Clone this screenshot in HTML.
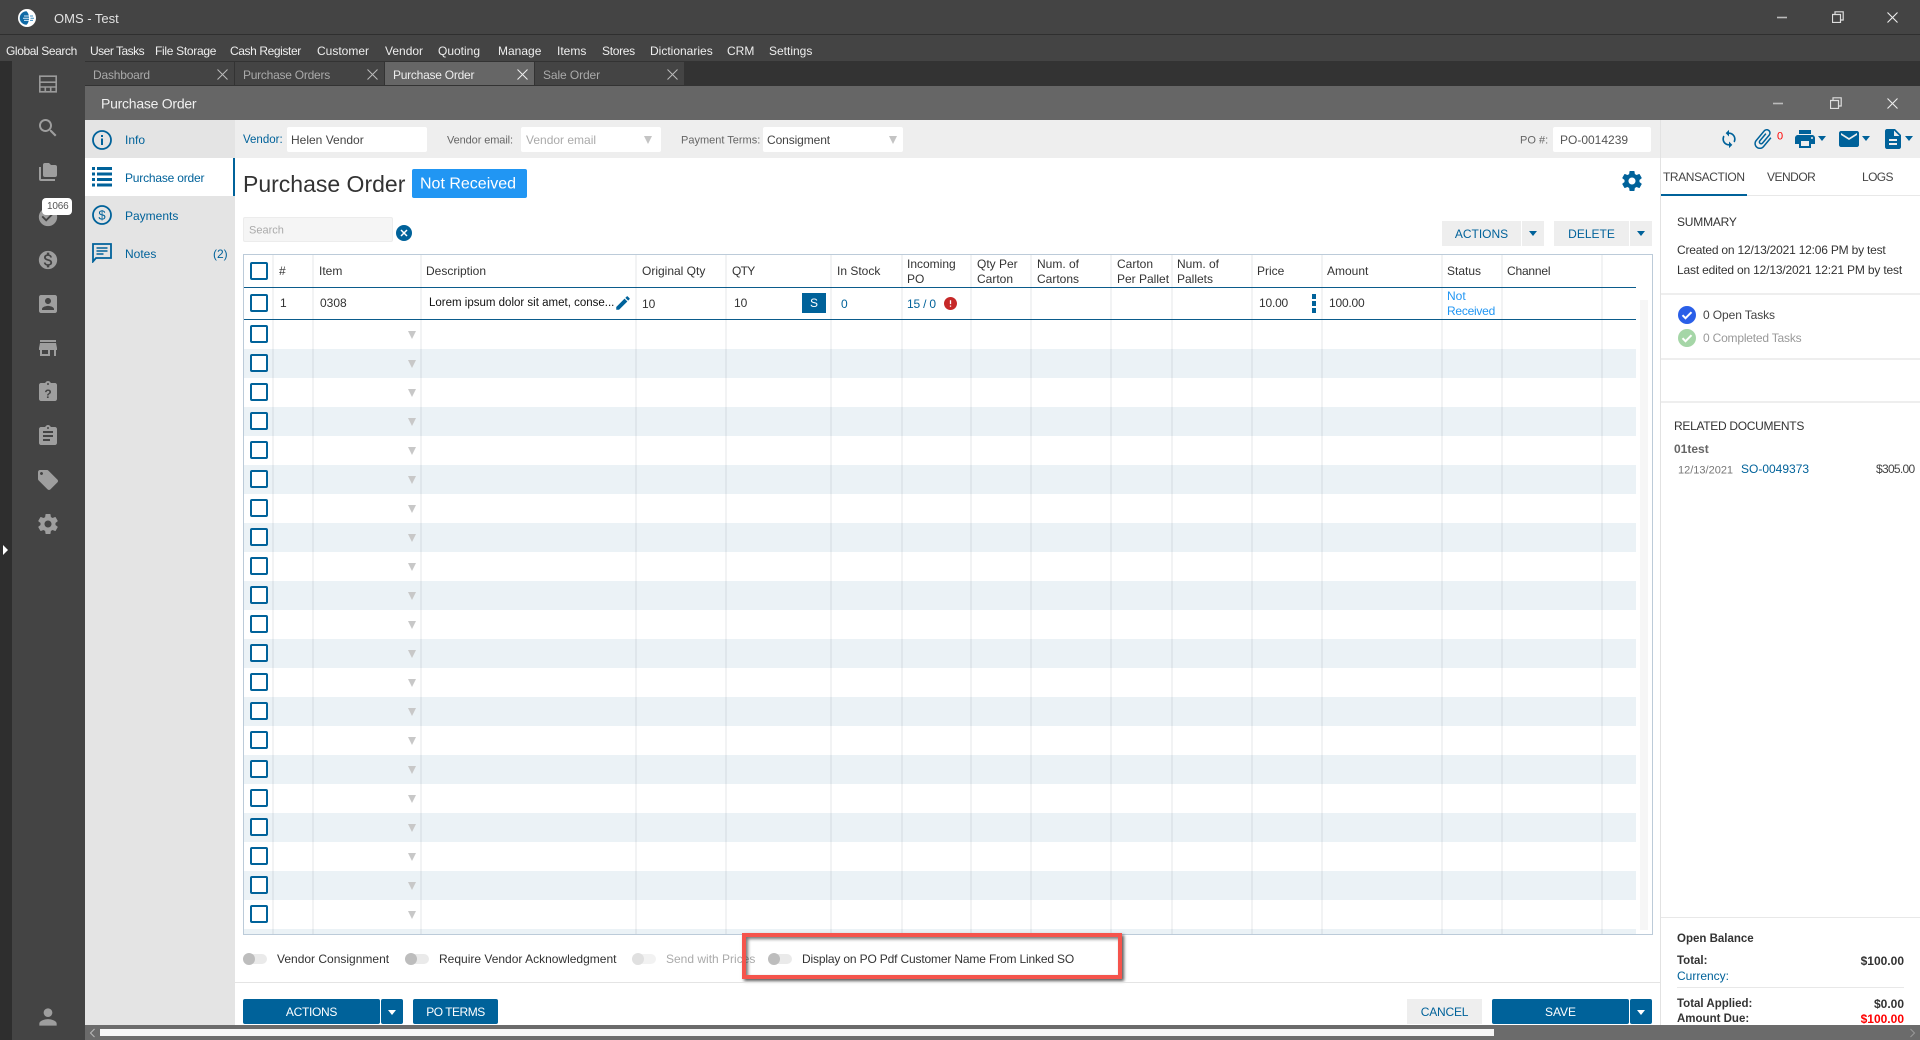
<!DOCTYPE html>
<html><head><meta charset="utf-8"><title>OMS - Test</title>
<style>
html,body{margin:0;padding:0;width:1920px;height:1040px;overflow:hidden;background:#fff;font-family:"Liberation Sans",sans-serif;font-size:12px;color:#333}
div,span,i,svg{position:absolute;display:block}
.t{position:absolute;white-space:nowrap;transform:translateY(-50%);line-height:1.2}
.m{top:51px;color:#eee;font-size:12px}
.tab{top:62px;height:23px;width:149px;background:#444}
.x{top:74px;color:#aaa}
.sep{top:255px;width:2px;height:679px;background:rgba(60,70,90,.065)}
.h{top:271px;color:#333}
.h2{color:#333}
.b{color:#333}
.blue{color:#00629a}
.cb i{position:relative;width:14px;height:14px;border:2px solid #00629a;border-radius:2px;margin-bottom:11px;background:#fff;left:0}
.tr i{position:relative;width:0;height:0;border-left:4.5px solid transparent;border-right:4.5px solid transparent;border-top:8px solid #c8c8c8;margin-bottom:21px}
.tg{top:953px;width:24px;height:12px}
.tg b{position:absolute;left:0;top:1px;width:24px;height:10px;border-radius:5px;background:#eaeaea}
.tg u{position:absolute;left:0;top:0;width:12px;height:12px;border-radius:6px;background:#bdbdbd}
.btn{background:#00629a;color:#fff;text-align:center;top:999px;height:25px;line-height:26px;border-radius:2px}
.gbtn{background:#eee;color:#00629a;text-align:center;height:25px;line-height:26px}
.inp{background:#fff;border-radius:2px;top:127px;height:25px}
.car{width:0;height:0;border-left:4px solid transparent;border-right:4px solid transparent;border-top:5px solid #00629a}
.tri{width:0;height:0;border-left:4.5px solid transparent;border-right:4.5px solid transparent;border-top:8px solid #c4c4c4}
.lb{color:#666}
</style></head><body>

<!-- title + menu -->
<div style="left:0;top:0;width:1920px;height:34px;background:#444"></div>
<div style="left:0;top:34px;width:1920px;height:1px;background:#2f2f2f"></div>
<div style="left:0;top:35px;width:1920px;height:26px;background:#444"></div>
<div style="left:0;top:61px;width:1920px;height:25px;background:#333"></div>

<svg style="left:18px;top:9px" width="18" height="18" viewBox="0 0 18 18"><circle cx="9" cy="9" r="9" fill="#fff"/><path d="M8.500 2.200A6.800 6.800 0 0 0 8.500 15.800C10.500 14 11 11.500 11 9S10.500 4 8.500 2.200z" fill="#0f6aa6"/><path d="M6 7h5M5 9.200h6M6 11.400h5" stroke="#d5ebf8" stroke-width="1"/><path d="M12 7h3M12.500 9.200h3.500M12 11.400h3" stroke="#3d8fc4" stroke-width="1"/></svg>
<span class="t" style="left:54px;top:19px;font-size:13px;color:#e2e2e2">OMS - Test</span>

<svg style="left:1776px;top:11px" width="12" height="12"><path d="M1 6.500h10" stroke="#bbb" stroke-width="1.600"/></svg>
<svg style="left:1832px;top:11px" width="12" height="12"><path d="M.5 3.500h8v8h-8zM3 3V.8h8.200V9H9" fill="none" stroke="#ddd" stroke-width="1.200"/></svg>
<svg style="left:1887px;top:12px" width="11" height="11"><path d="M.5.5l10 10M10.500.5l-10 10" stroke="#eee" stroke-width="1.100"/></svg>

<span class="t m" style="left:6px;letter-spacing:-.4px">Global Search</span>
<span class="t m" style="left:90px;letter-spacing:-.5px">User Tasks</span>
<span class="t m" style="left:155px;letter-spacing:-.3px">File Storage</span>
<span class="t m" style="left:230px;letter-spacing:-.4px">Cash Register</span>
<span class="t m" style="left:317px">Customer</span>
<span class="t m" style="left:385px">Vendor</span>
<span class="t m" style="left:438px">Quoting</span>
<span class="t m" style="left:498px">Manage</span>
<span class="t m" style="left:557px">Items</span>
<span class="t m" style="left:602px;letter-spacing:-.3px">Stores</span>
<span class="t m" style="left:650px">Dictionaries</span>
<span class="t m" style="left:727px">CRM</span>
<span class="t m" style="left:769px">Settings</span>

<!-- tabs -->
<div class="tab" style="left:85px"></div>
<div class="tab" style="left:235px"></div>
<div class="tab" style="left:385px;background:#666"></div>
<div class="tab" style="left:535px"></div>
<span class="t" style="left:93px;top:75px;color:#aaa;letter-spacing:-.2px">Dashboard</span>
<span class="t" style="left:243px;top:75px;color:#aaa;letter-spacing:-.25px">Purchase Orders</span>
<span class="t" style="left:393px;top:75px;color:#eee;letter-spacing:-.25px">Purchase Order</span>
<span class="t" style="left:543px;top:75px;color:#aaa;letter-spacing:-.1px">Sale Order</span>
<svg style="left:217px;top:69px" width="11" height="11"><path d="M.5.5l10 10M10.500.5l-10 10" stroke="#bbb" stroke-width="1"/></svg>
<svg style="left:367px;top:69px" width="11" height="11"><path d="M.5.5l10 10M10.500.5l-10 10" stroke="#bbb" stroke-width="1"/></svg>
<svg style="left:517px;top:69px" width="11" height="11"><path d="M.5.5l10 10M10.500.5l-10 10" stroke="#eee" stroke-width="1"/></svg>
<svg style="left:667px;top:69px" width="11" height="11"><path d="M.5.5l10 10M10.500.5l-10 10" stroke="#bbb" stroke-width="1"/></svg>

<!-- sidebar -->
<div style="left:0;top:61px;width:12px;height:979px;background:#2e2e2e"></div>
<div style="left:12px;top:61px;width:73px;height:979px;background:#444"></div>
<svg style="left:39px;top:75px" width="18" height="18" viewBox="0 0 18 18" fill="none" stroke="#9a9a9a" stroke-width="1.600"><path d="M.8 1.200h16.400v15.600H.8zM.8 7.200h16.400M.8 12h16.400M6.300 12v4.800M11.700 12v4.800"/></svg>
<svg style="left:36px;top:116px" width="24" height="24" viewBox="0 0 24 24" fill="#9e9e9e"><path d="M15.500 14h-.79l-.28-.27C15.410 12.590 16 11.110 16 9.500 16 5.910 13.090 3 9.500 3S3 5.910 3 9.500 5.910 16 9.500 16c1.610 0 3.090-.59 4.230-1.570l.27.28v.79l5 4.990L20.490 19l-4.990-5zm-6 0C7.010 14 5 11.990 5 9.500S7.010 5 9.500 5 14 7.010 14 9.500 11.990 14 9.500 14z"/></svg>
<svg style="left:39px;top:163px" width="18" height="18" viewBox="0 0 18 18" fill="#9e9e9e"><path d="M0 4h2v12h14v2H2a2 2 0 0 1-2-2zM4 2a2 2 0 0 1 2-2h4l2 2h4a2 2 0 0 1 2 2v8a2 2 0 0 1-2 2H6a2 2 0 0 1-2-2z"/></svg>
<svg style="left:37px;top:206px" width="22" height="22" viewBox="0 0 24 24" fill="#9e9e9e"><path d="M12 2C6.480 2 2 6.480 2 12s4.480 10 10 10 10-4.480 10-10S17.520 2 12 2zm-2 15l-5-5 1.410-1.410L10 14.170l7.590-7.590L19 8l-9 9z"/></svg>
<div style="left:42px;top:198px;width:30px;height:17px;background:#fff;border-radius:4px"></div>
<span class="t" style="left:47px;top:207px;font-size:10px;color:#555;letter-spacing:-.2px">1066</span>
<svg style="left:37px;top:249px" width="22" height="22" viewBox="0 0 24 24" fill="#9e9e9e"><path d="M12 2C6.480 2 2 6.480 2 12s4.480 10 10 10 10-4.480 10-10S17.520 2 12 2zm1.410 16.090V20h-2.670v-1.930c-1.710-.36-3.160-1.460-3.270-3.400h1.960c.1 1.050.82 1.870 2.650 1.870 1.960 0 2.400-.98 2.400-1.590 0-.83-.44-1.610-2.670-2.140-2.480-.6-4.180-1.620-4.180-3.670 0-1.720 1.390-2.840 3.110-3.210V4h2.670v1.950c1.860.45 2.790 1.860 2.850 3.390H14.300c-.05-1.110-.64-1.870-2.220-1.870-1.500 0-2.400.68-2.400 1.640 0 .84.65 1.390 2.670 1.910s4.180 1.390 4.180 3.910c-.01 1.830-1.380 2.830-3.120 3.160z"/></svg>
<svg style="left:36px;top:292px" width="24" height="24" viewBox="0 0 24 24" fill="#9e9e9e"><path d="M3 5v14c0 1.100.89 2 2 2h14c1.100 0 2-.9 2-2V5c0-1.100-.9-2-2-2H5c-1.110 0-2 .9-2 2zm12 4c0 1.660-1.340 3-3 3s-3-1.340-3-3 1.340-3 3-3 3 1.340 3 3zm-9 8c0-2 4-3.100 6-3.100s6 1.100 6 3.100v1H6v-1z"/></svg>
<svg style="left:36px;top:336px" width="24" height="24" viewBox="0 0 24 24" fill="#9e9e9e"><path d="M20 4H4v2h16V4zm1 10v-2l-1-5H4l-1 5v2h1v6h10v-6h4v6h2v-6h1zm-9 4H6v-4h6v4z"/></svg>
<svg style="left:36px;top:380px" width="24" height="24" viewBox="0 0 24 24" fill="#9e9e9e"><path d="M19 3h-4.180C14.400 1.840 13.300 1 12 1c-1.300 0-2.400.84-2.820 2H5c-1.100 0-2 .9-2 2v14c0 1.100.9 2 2 2h14c1.100 0 2-.9 2-2V5c0-1.100-.9-2-2-2zm-7 0c.55 0 1 .45 1 1s-.45 1-1 1-1-.45-1-1 .45-1 1-1z"/><text x="12" y="18" text-anchor="middle" font-size="12" font-weight="bold" font-family="Liberation Sans" fill="#444">?</text></svg>
<svg style="left:36px;top:424px" width="24" height="24" viewBox="0 0 24 24" fill="#9e9e9e"><path d="M19 3h-4.180C14.400 1.840 13.300 1 12 1c-1.300 0-2.400.84-2.820 2H5c-1.100 0-2 .9-2 2v14c0 1.100.9 2 2 2h14c1.100 0 2-.9 2-2V5c0-1.100-.9-2-2-2zm-7 0c.55 0 1 .45 1 1s-.45 1-1 1-1-.45-1-1 .45-1 1-1zm2 14H7v-2h7v2zm3-4H7v-2h10v2zm0-4H7V7h10v2z"/></svg>
<svg style="left:36px;top:468px" width="24" height="24" viewBox="0 0 24 24" fill="#9e9e9e"><path d="M21.410 11.580l-9-9C12.050 2.220 11.550 2 11 2H4c-1.100 0-2 .9-2 2v7c0 .55.22 1.050.59 1.420l9 9c.36.36.86.58 1.410.58.55 0 1.050-.22 1.410-.59l7-7c.37-.36.59-.86.59-1.410 0-.55-.23-1.060-.59-1.420zM5.500 7C4.670 7 4 6.330 4 5.500S4.670 4 5.500 4 7 4.670 7 5.500 6.330 7 5.500 7z"/></svg>
<svg style="left:36px;top:512px" width="24" height="24" viewBox="0 0 24 24" fill="#9e9e9e"><path d="M19.430 12.980c.04-.32.07-.64.07-.98s-.03-.66-.07-.98l2.110-1.650c.19-.15.24-.42.12-.64l-2-3.460c-.12-.22-.39-.3-.61-.22l-2.490 1c-.52-.4-1.080-.73-1.690-.98l-.38-2.650C14.460 2.180 14.250 2 14 2h-4c-.25 0-.46.18-.49.42l-.38 2.650c-.61.25-1.170.59-1.690.98l-2.490-1c-.23-.09-.49 0-.61.22l-2 3.460c-.13.22-.07.49.12.64l2.110 1.650c-.04.32-.07.65-.07.98s.03.66.07.98l-2.110 1.650c-.19.15-.24.42-.12.64l2 3.460c.12.22.39.3.61.22l2.490-1c.52.4 1.080.73 1.690.98l.38 2.650c.03.24.24.42.49.42h4c.25 0 .46-.18.49-.42l.38-2.650c.61-.25 1.170-.59 1.690-.98l2.490 1c.23.09.49 0 .61-.22l2-3.460c.12-.22.07-.49-.12-.64l-2.110-1.650zM12 15.500c-1.930 0-3.500-1.570-3.500-3.500s1.570-3.500 3.500-3.500 3.500 1.570 3.500 3.500-1.570 3.500-3.500 3.500z"/></svg>
<svg style="left:35px;top:1004px" width="26" height="26" viewBox="0 0 24 24" fill="#9e9e9e"><path d="M12 12c2.210 0 4-1.790 4-4s-1.790-4-4-4-4 1.790-4 4 1.790 4 4 4zm0 2c-2.670 0-8 1.340-8 4v2h16v-2c0-2.660-5.330-4-8-4z"/></svg>
<svg style="left:3px;top:545px" width="6" height="10"><path d="M0 0l5 5-5 5z" fill="#fff"/></svg>

<!-- window header -->
<div style="left:85px;top:86px;width:1835px;height:34px;background:#666"></div>
<span class="t" style="left:101px;top:104px;font-size:14px;color:#f0f0f0;letter-spacing:-.25px">Purchase Order</span>
<svg style="left:1772px;top:97px" width="12" height="12"><path d="M1 6.500h10" stroke="#bbb" stroke-width="1.600"/></svg>
<svg style="left:1830px;top:97px" width="12" height="12"><path d="M.5 3.500h8v8h-8zM3 3V.8h8.200V9H9" fill="none" stroke="#ddd" stroke-width="1.200"/></svg>
<svg style="left:1887px;top:98px" width="11" height="11"><path d="M.5.5l10 10M10.500.5l-10 10" stroke="#eee" stroke-width="1.100"/></svg>

<!-- left nav -->
<div style="left:85px;top:120px;width:150px;height:905px;background:#e4e4e4"></div>
<div style="left:85px;top:158px;width:148px;height:38px;background:#fff;border-right:2px solid #00629a"></div>
<svg style="left:92px;top:130px" width="20" height="20" viewBox="0 0 20 20"><circle cx="10" cy="10" r="9" fill="none" stroke="#00629a" stroke-width="1.800"/><path d="M9 8.500h2V15H9zM9 5h2v2H9z" fill="#00629a"/></svg>
<svg style="left:92px;top:167px" width="20" height="20" viewBox="0 0 20 20" fill="#00629a"><path d="M0 0h3v3H0zM5 0h15v3H5zM0 5.500h3v3H0zM5 5.500h15v3H5zM0 11h3v3H0zM5 11h15v3H5zM0 16.500h3v3H0zM5 16.500h15v3H5z"/></svg>
<svg style="left:92px;top:205px" width="20" height="20" viewBox="0 0 20 20"><circle cx="10" cy="10" r="9" fill="none" stroke="#00629a" stroke-width="1.800"/><text x="10" y="14.500" text-anchor="middle" font-size="13" font-family="Liberation Sans" fill="#00629a">$</text></svg>
<svg style="left:92px;top:243px" width="20" height="20" viewBox="0 0 20 20" fill="none" stroke="#00629a" stroke-width="1.800"><path d="M1 1h18v14H4l-3 3.500z"/><path d="M4.500 5h11M4.500 8h11M4.500 11h7" stroke-width="1.500"/></svg>
<span class="t blue" style="left:125px;top:140px">Info</span>
<span class="t blue" style="left:125px;top:178px;letter-spacing:-.2px">Purchase order</span>
<span class="t blue" style="left:125px;top:216px">Payments</span>
<span class="t blue" style="left:125px;top:254px">Notes</span>
<span class="t blue" style="left:213px;top:254px">(2)</span>

<!-- toolbar -->
<div style="left:235px;top:120px;width:1685px;height:38px;background:#eee"></div>
<span class="t blue" style="left:243px;top:141px;font-size:11.500px">Vendor:</span>
<div class="inp" style="left:287px;width:140px"></div>
<span class="t" style="left:291px;top:140px;color:#444">Helen Vendor</span>
<span class="t lb" style="left:447px;top:141px;font-size:11px;letter-spacing:-.1px">Vendor email:</span>
<div class="inp" style="left:521px;width:140px"></div>
<span class="t" style="left:526px;top:140px;color:#aaa">Vendor email</span>
<div class="tri" style="left:644px;top:136px"></div>
<span class="t lb" style="left:681px;top:141px;font-size:11px">Payment Terms:</span>
<div class="inp" style="left:763px;width:140px"></div>
<span class="t" style="left:767px;top:140px;color:#444;letter-spacing:-.1px">Consigment</span>
<div class="tri" style="left:889px;top:136px"></div>
<span class="t lb" style="left:1520px;top:141px;font-size:11px">PO #:</span>
<div class="inp" style="left:1553px;width:98px"></div>
<span class="t" style="left:1560px;top:140px;color:#555">PO-0014239</span>

<div style="left:1660px;top:120px;width:1px;height:905px;background:#e2e2e2"></div>
<svg style="left:1719px;top:129px" width="20" height="20" viewBox="0 0 24 24" fill="#00629a"><path d="M12 4V1L8 5l4 4V6c3.310 0 6 2.690 6 6 0 1.010-.25 1.970-.7 2.800l1.460 1.460C19.540 15.030 20 13.570 20 12c0-4.420-3.580-8-8-8zm0 14c-3.310 0-6-2.690-6-6 0-1.010.25-1.970.7-2.800L5.240 7.740C4.460 8.970 4 10.430 4 12c0 4.420 3.580 8 8 8v3l4-4-4-4v3z"/></svg>
<svg style="left:1751px;top:127px;transform:rotate(40deg)" width="24" height="24" viewBox="0 0 24 24" fill="#00629a"><path d="M16.500 6v11.500c0 2.210-1.790 4-4 4s-4-1.790-4-4V5c0-1.380 1.120-2.500 2.500-2.500s2.500 1.120 2.500 2.500v10.500c0 .55-.45 1-1 1s-1-.45-1-1V6H10v9.500c0 1.380 1.120 2.500 2.500 2.500s2.500-1.120 2.500-2.500V5c0-2.210-1.790-4-4-4S7 2.790 7 5v12.500c0 3.040 2.460 5.500 5.500 5.500s5.500-2.460 5.500-5.500V6h-1.500z"/></svg>
<span class="t" style="left:1777px;top:137px;color:#f00;font-size:11px">0</span>
<svg style="left:1793px;top:127px" width="24" height="24" viewBox="0 0 24 24" fill="#00629a"><path d="M19 8H5c-1.660 0-3 1.340-3 3v6h4v4h12v-4h4v-6c0-1.660-1.340-3-3-3zm-3 11H8v-5h8v5zm3-7c-.55 0-1-.45-1-1s.45-1 1-1 1 .45 1 1-.45 1-1 1zm-1-9H6v4h12V3z"/></svg>
<div class="car" style="left:1818px;top:136px"></div>
<svg style="left:1837px;top:127px" width="24" height="24" viewBox="0 0 24 24" fill="#00629a"><path d="M20 4H4c-1.100 0-1.990.9-1.990 2L2 18c0 1.100.9 2 2 2h16c1.100 0 2-.9 2-2V6c0-1.100-.9-2-2-2zm0 4l-8 5-8-5V6l8 5 8-5v2z"/></svg>
<div class="car" style="left:1862px;top:136px"></div>
<svg style="left:1881px;top:127px" width="24" height="24" viewBox="0 0 24 24" fill="#00629a"><path d="M14 2H6c-1.100 0-1.990.9-1.990 2L4 20c0 1.100.89 2 1.990 2H18c1.100 0 2-.9 2-2V8l-6-6zm2 16H8v-2h8v2zm0-4H8v-2h8v2zm-3-5V3.500L18.500 9H13z"/></svg>
<div class="car" style="left:1905px;top:136px"></div>

<!-- heading -->
<span class="t" style="left:243px;top:185px;font-size:23px;color:#333">Purchase Order</span>
<div style="left:412px;top:169px;width:115px;height:29px;background:#2196f3;border-radius:2px"></div>
<span class="t" style="left:420px;top:184px;font-size:16px;color:#fff">Not Received</span>
<svg style="left:1620px;top:169px" width="24" height="24" viewBox="0 0 24 24" fill="#00629a"><path d="M19.430 12.980c.04-.32.07-.64.07-.98s-.03-.66-.07-.98l2.110-1.650c.19-.15.24-.42.12-.64l-2-3.460c-.12-.22-.39-.3-.61-.22l-2.490 1c-.52-.4-1.080-.73-1.690-.98l-.38-2.650C14.460 2.180 14.250 2 14 2h-4c-.25 0-.46.18-.49.42l-.38 2.650c-.61.25-1.170.59-1.690.98l-2.490-1c-.23-.09-.49 0-.61.22l-2 3.460c-.13.22-.07.49.12.64l2.110 1.650c-.04.32-.07.65-.07.98s.03.66.07.98l-2.110 1.650c-.19.15-.24.42-.12.64l2 3.460c.12.22.39.3.61.22l2.490-1c.52.4 1.080.73 1.690.98l.38 2.650c.03.24.24.42.49.42h4c.25 0 .46-.18.49-.42l.38-2.650c.61-.25 1.170-.59 1.690-.98l2.490 1c.23.09.49 0 .61-.22l2-3.460c.12-.22.07-.49-.12-.64l-2.110-1.650zM12 15.500c-1.930 0-3.500-1.570-3.500-3.500s1.570-3.500 3.500-3.500 3.500 1.570 3.500 3.500-1.570 3.500-3.500 3.500z"/></svg>

<!-- search -->
<div style="left:243px;top:217px;width:148px;height:23px;background:#f5f5f5;border:1px solid #ececec;border-radius:2px"></div>
<span class="t" style="left:249px;top:231px;color:#aaa;font-size:11px">Search</span>
<svg style="left:396px;top:225px" width="16" height="16" viewBox="0 0 16 16"><circle cx="8" cy="8" r="8" fill="#00629a"/><path d="M5 5l6 6M11 5l-6 6" stroke="#fff" stroke-width="1.500"/></svg>

<div class="gbtn" style="left:1442px;top:221px;width:79px">ACTIONS</div>
<div class="gbtn" style="left:1522px;top:221px;width:22px"></div><div class="car" style="left:1529px;top:231px"></div>
<div class="gbtn" style="left:1554px;top:221px;width:75px">DELETE</div>
<div class="gbtn" style="left:1630px;top:221px;width:22px"></div><div class="car" style="left:1637px;top:231px"></div>

<!-- grid -->
<div style="left:243px;top:254px;width:1408px;height:679px;border:1px solid #bccbd9;background:#fff"></div>
<div style="left:244px;top:320px;width:1392px;height:614px;background:repeating-linear-gradient(to bottom,#fff 0,#fff 29px,#ebf2f6 29px,#ebf2f6 58px)"></div>
<div style="left:1640px;top:300px;width:8px;height:630px;background:#f6f6f6"></div>
<div style="left:244px;top:287px;width:1392px;height:1px;background:#0b5c8c"></div>
<div style="left:244px;top:319px;width:1392px;height:1px;background:#0b5c8c"></div>

<div class="sep" style="left:272px"></div><div class="sep" style="left:312px"></div><div class="sep" style="left:420px"></div><div class="sep" style="left:635px"></div><div class="sep" style="left:725px"></div><div class="sep" style="left:830px"></div><div class="sep" style="left:901px"></div><div class="sep" style="left:970px"></div><div class="sep" style="left:1030px"></div><div class="sep" style="left:1110px"></div><div class="sep" style="left:1171px"></div><div class="sep" style="left:1251px"></div><div class="sep" style="left:1321px"></div><div class="sep" style="left:1441px"></div><div class="sep" style="left:1501px"></div><div class="sep" style="left:1601px"></div>

<span class="t h" style="left:279px">#</span>
<span class="t h" style="left:319px">Item</span>
<span class="t h" style="left:426px">Description</span>
<span class="t h" style="left:642px">Original Qty</span>
<span class="t h" style="left:732px;letter-spacing:-.7px">QTY</span>
<span class="t h" style="left:837px">In Stock</span>
<span class="t h2" style="left:907px;top:264px">Incoming</span><span class="t h2" style="left:907px;top:279px">PO</span>
<span class="t h2" style="left:977px;top:264px">Qty Per</span><span class="t h2" style="left:977px;top:279px">Carton</span>
<span class="t h2" style="left:1037px;top:264px">Num. of</span><span class="t h2" style="left:1037px;top:279px">Cartons</span>
<span class="t h2" style="left:1117px;top:264px">Carton</span><span class="t h2" style="left:1117px;top:279px">Per Pallet</span>
<span class="t h2" style="left:1177px;top:264px">Num. of</span><span class="t h2" style="left:1177px;top:279px">Pallets</span>
<span class="t h" style="left:1257px">Price</span>
<span class="t h" style="left:1327px">Amount</span>
<span class="t h" style="left:1447px">Status</span>
<span class="t h" style="left:1507px;letter-spacing:-.2px">Channel</span>

<!-- row 1 -->
<span class="t b" style="left:280px;top:303px">1</span>
<span class="t b" style="left:320px;top:303px">0308</span>
<span class="t" style="left:429px;top:303.500px;color:#111;font-size:11.500px">Lorem ipsum dolor sit amet, conse...</span>
<svg style="left:614px;top:294px" width="18" height="18" viewBox="0 0 24 24" fill="#00629a"><path d="M3 17.250V21h3.750L17.810 9.940l-3.750-3.750L3 17.250zM20.710 7.040c.39-.39.39-1.020 0-1.410l-2.340-2.340c-.39-.39-1.020-.39-1.410 0l-1.830 1.830 3.750 3.750 1.830-1.830z"/></svg>
<span class="t b" style="left:642px;top:303.500px">10</span>
<span class="t b" style="left:734px;top:303px">10</span>
<div style="left:802px;top:293px;width:24px;height:20px;background:#00629a;color:#fff;text-align:center;line-height:20px">S</div>
<span class="t blue" style="left:841px;top:303.500px">0</span>
<span class="t blue" style="left:907px;top:303.500px;letter-spacing:-.2px">15 / 0</span>
<svg style="left:944px;top:297px" width="13" height="13" viewBox="2 2 20 20" fill="#c62828"><path d="M12 2C6.480 2 2 6.480 2 12s4.480 10 10 10 10-4.480 10-10S17.520 2 12 2zm1 15h-2v-2h2v2zm0-4h-2V7h2v6z"/></svg>
<span class="t b" style="left:1259px;top:303px;letter-spacing:-.2px">10.00</span>
<div style="left:1312px;top:294px;width:4px;height:5px;background:#00629a"></div>
<div style="left:1312px;top:301px;width:4px;height:5px;background:#00629a"></div>
<div style="left:1312px;top:308px;width:4px;height:5px;background:#00629a"></div>
<span class="t b" style="left:1329px;top:303px;letter-spacing:-.2px">100.00</span>
<span class="t" style="left:1447px;top:296px;color:#2196f3">Not</span>
<span class="t" style="left:1447px;top:311px;color:#2196f3;letter-spacing:-.25px">Received</span>

<!-- checkboxes -->
<div style="left:250px;top:262px;width:14px;height:14px;border:2px solid #00629a;border-radius:2px"></div>
<div style="left:250px;top:294px;width:14px;height:14px;border:2px solid #00629a;border-radius:2px"></div>
<div style="left:244px;top:320px;width:30px;height:614px;overflow:hidden">
<div class="cb" style="left:6px;top:5px">
<i></i><i></i><i></i><i></i><i></i><i></i><i></i><i></i><i></i><i></i><i></i><i></i><i></i><i></i><i></i><i></i><i></i><i></i><i></i><i></i><i></i><i></i>
</div></div>
<div class="tr" style="left:407.500px;top:331px">
<i></i><i></i><i></i><i></i><i></i><i></i><i></i><i></i><i></i><i></i><i></i><i></i><i></i><i></i><i></i><i></i><i></i><i></i><i></i><i></i><i></i>
</div>

<!-- toggles -->
<div class="tg" style="left:243px"><b></b><u></u></div>
<span class="t" style="left:277px;top:959px;color:#333">Vendor Consignment</span>
<div class="tg" style="left:405px"><b></b><u></u></div>
<span class="t" style="left:439px;top:959px;color:#333">Require Vendor Acknowledgment</span>
<div class="tg" style="left:632px"><b style="background:#f2f2f2"></b><u style="background:#e0e0e0"></u></div>
<span class="t" style="left:666px;top:959px;color:#aaa">Send with Prices</span>
<div class="tg" style="left:768px"><b></b><u></u></div>
<span class="t" style="left:802px;top:959px;color:#333;letter-spacing:-.16px">Display on PO Pdf Customer Name From Linked SO</span>
<div style="left:742px;top:933px;width:372px;height:38px;border:4px solid #f5544c;box-shadow:2px 2px 3px rgba(0,0,0,.65),inset 2px 2px 3px rgba(0,0,0,.55)"></div>

<!-- footer -->
<div style="left:235px;top:982px;width:1425px;height:1px;background:#e4e4e4"></div>
<div class="btn" style="left:243px;width:137px;letter-spacing:-.3px">ACTIONS</div>
<div class="btn" style="left:381px;width:22px"></div><div class="car" style="left:388px;top:1010px;border-top-color:#fff"></div>
<div class="btn" style="left:413px;width:85px;letter-spacing:-.5px">PO TERMS</div>
<div class="gbtn" style="left:1407px;top:999px;width:75px;letter-spacing:-.2px">CANCEL</div>
<div class="btn" style="left:1492px;width:137px">SAVE</div>
<div class="btn" style="left:1630px;width:22px"></div><div class="car" style="left:1637px;top:1010px;border-top-color:#fff"></div>

<!-- right panel -->
<span class="t" style="left:1663px;top:177px;color:#444;letter-spacing:-.4px">TRANSACTION</span>
<span class="t" style="left:1767px;top:177px;color:#444;letter-spacing:-.5px">VENDOR</span>
<span class="t" style="left:1862px;top:177px;color:#444;letter-spacing:-.6px">LOGS</span>
<div style="left:1661px;top:195px;width:259px;height:1px;background:#e8e8e8"></div>
<div style="left:1661px;top:194px;width:86px;height:2px;background:#00629a"></div>
<span class="t" style="left:1677px;top:222px;color:#333;letter-spacing:-.2px">SUMMARY</span>
<span class="t" style="left:1677px;top:250px;color:#333;letter-spacing:-.2px">Created on 12/13/2021 12:06 PM by test</span>
<span class="t" style="left:1677px;top:270px;color:#333;letter-spacing:-.17px">Last edited on 12/13/2021 12:21 PM by test</span>
<div style="left:1661px;top:293px;width:259px;height:2px;background:#eee"></div>
<svg style="left:1678px;top:306px" width="18" height="18" viewBox="0 0 18 18"><circle cx="9" cy="9" r="9" fill="#2a5fe8"/><path d="M4.500 9.200l3 3 6-6" fill="none" stroke="#fff" stroke-width="2"/></svg>
<span class="t" style="left:1703px;top:315px;color:#444;letter-spacing:-.1px">0 Open Tasks</span>
<svg style="left:1678px;top:329px" width="18" height="18" viewBox="0 0 18 18"><circle cx="9" cy="9" r="9" fill="#a5d6a7"/><path d="M4.500 9.200l3 3 6-6" fill="none" stroke="#fff" stroke-width="2"/></svg>
<span class="t" style="left:1703px;top:338px;color:#999;letter-spacing:-.2px">0 Completed Tasks</span>
<div style="left:1661px;top:358px;width:259px;height:2px;background:#eee"></div>
<div style="left:1661px;top:401px;width:259px;height:2px;background:#eee"></div>
<span class="t" style="left:1674px;top:426px;color:#333;letter-spacing:-.3px">RELATED DOCUMENTS</span>
<span class="t" style="left:1674px;top:449px;color:#666;font-weight:bold">01test</span>
<span class="t" style="left:1678px;top:471px;color:#777;font-size:11px">12/13/2021</span>
<span class="t blue" style="left:1741px;top:469px">SO-0049373</span>
<span class="t" style="left:1876px;top:469px;color:#444;letter-spacing:-.7px">$305.00</span>

<div style="left:1661px;top:917px;width:259px;height:1px;background:#e8e8e8"></div>
<span class="t" style="left:1677px;top:940px;color:#333;font-weight:bold;font-size:11.500px">Open Balance</span>
<span class="t" style="left:1677px;top:962px;color:#333;font-weight:bold;font-size:11.500px">Total:</span>
<span class="t" style="right:16px;top:961px;color:#333;font-weight:bold;font-size:12px">$100.00</span>
<span class="t blue" style="left:1677px;top:976px">Currency:</span>
<div style="left:1677px;top:987px;width:227px;height:1px;background:#e8e8e8"></div>
<span class="t" style="left:1677px;top:1005px;color:#333;font-weight:bold;font-size:11.500px">Total Applied:</span>
<span class="t" style="right:16px;top:1004px;color:#333;font-weight:bold;font-size:12px">$0.00</span>
<span class="t" style="left:1677px;top:1020px;color:#333;font-weight:bold;font-size:11.500px">Amount Due:</span>
<span class="t" style="right:16px;top:1019px;color:#f00;font-weight:bold;font-size:12px">$100.00</span>

<!-- bottom scroll -->
<div style="left:85px;top:1025px;width:1835px;height:15px;background:#6b6b6b"></div>
<div style="left:100px;top:1029px;width:1394px;height:7px;background:#f5f5f5"></div>
<svg style="left:89px;top:1028px" width="7" height="10"><path d="M5.500 1L1.500 5l4 4" fill="none" stroke="#bbb" stroke-width="1"/></svg>
<svg style="left:1909px;top:1028px" width="7" height="10"><path d="M1.500 1l4 4-4 4" fill="none" stroke="#999" stroke-width="1"/></svg>
</body></html>
